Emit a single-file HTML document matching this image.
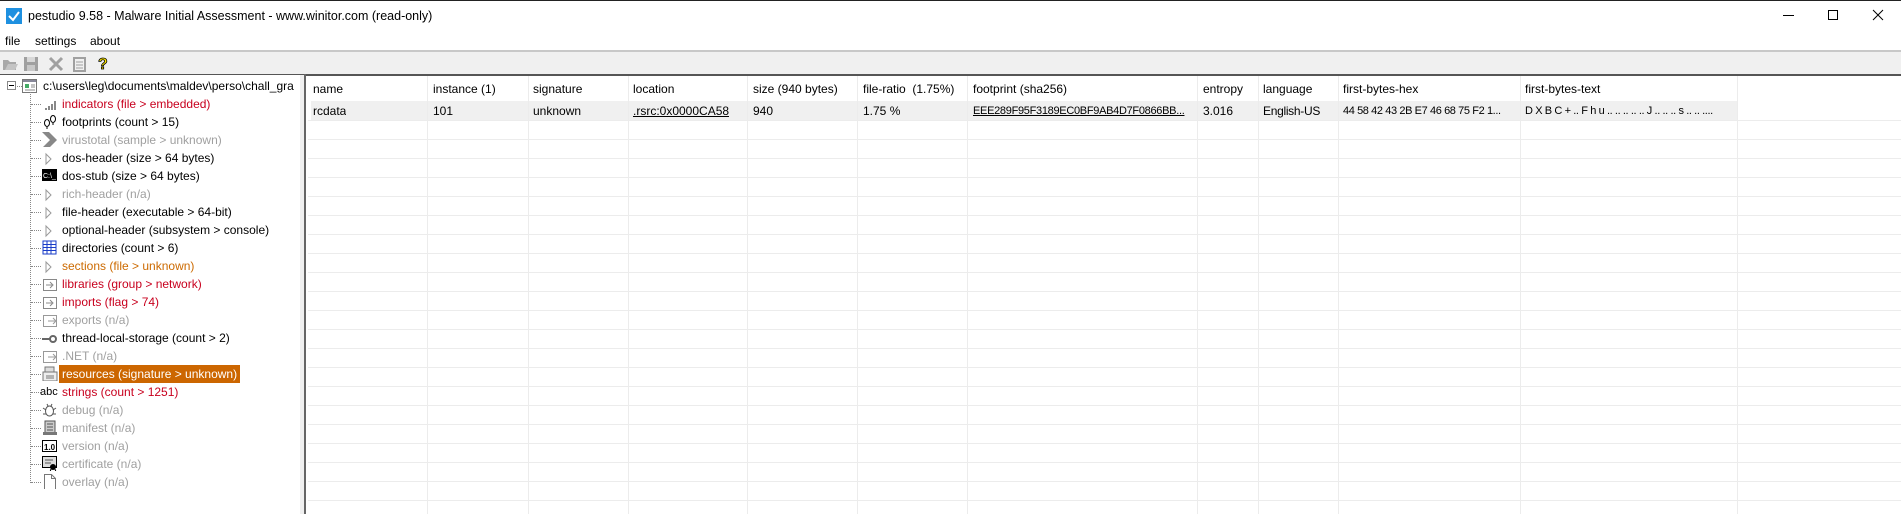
<!DOCTYPE html>
<html><head><meta charset="utf-8"><style>
*{margin:0;padding:0;box-sizing:border-box}
body{width:1901px;height:514px;overflow:hidden;background:#fff;font-family:"Liberation Sans",sans-serif;font-size:12px;color:#000;position:relative}
.a{position:absolute;white-space:nowrap}
.t{position:absolute;left:62px;height:18px;line-height:18px;white-space:nowrap;padding:0 3px;margin-left:-3px}
.red{color:#c8001e}.or{color:#cc6a00}.gr{color:#a0a0a0}
.sel{background:#cc6600;color:#fff}
.h{position:absolute;top:81px;height:16px;line-height:16px;white-space:nowrap}
.d{position:absolute;top:102px;height:18px;line-height:18px;white-space:nowrap;overflow:hidden}
.vl{position:absolute;top:76px;bottom:0;width:1px;background:#ececec}
.hl{position:absolute;left:308px;right:0;height:1px;background:#ececec}
.dh{position:absolute;left:31px;width:10px;height:1px;border-top:1px dotted #888}
.ic{position:absolute;left:42px;width:15px;height:15px}
</style></head><body>
<!-- title bar -->
<div class="a" style="left:0;top:0;width:1901px;height:1px;background:#222"></div>
<svg class="a" style="left:6px;top:8px" width="16" height="16"><rect width="16" height="16" fill="#1e90e0"/><path d="M3 8 L7 12 L13 4" stroke="#fff" stroke-width="2" fill="none"/></svg>
<div class="a" style="left:28px;top:8px;font-size:12.5px;line-height:16px">pestudio 9.58 - Malware Initial Assessment - www.winitor.com (read-only)</div>
<svg class="a" style="left:1780px;top:8px" width="110" height="16"><path d="M3 7.5H14" stroke="#000"/><rect x="48.5" y="2.5" width="9" height="9" fill="none" stroke="#000"/><path d="M93 2L103 12M103 2L93 12" stroke="#000"/></svg>
<!-- menu -->
<div class="a" style="left:5px;top:33px;line-height:16px">file</div>
<div class="a" style="left:35px;top:33px;line-height:16px">settings</div>
<div class="a" style="left:90px;top:33px;line-height:16px">about</div>
<div class="a" style="left:0;top:50px;width:1901px;height:2px;background:#c8c8c8"></div>
<div class="a" style="left:0;top:52px;width:1901px;height:23px;background:#f0f0f0"></div>
<!-- toolbar icons -->
<svg class="a" style="left:2px;top:55px" width="110" height="17">
<path d="M1 5h5l2 2h6v8H1z" fill="#a8a8a8"/><path d="M3 15l3-6h10l-3 6z" fill="#c4c4c4"/>
<rect x="22" y="2" width="14" height="14" fill="#a0a0a0"/><rect x="25" y="2" width="8" height="5" fill="#d8d8d8"/><rect x="25" y="10" width="8" height="6" fill="#c8c8c8"/>
<path d="M48 3L60 15M60 3L48 15" stroke="#a0a0a0" stroke-width="3"/>
<rect x="72" y="3" width="11" height="13" fill="none" stroke="#a0a0a0" stroke-width="2"/><path d="M74 7h7M74 10h7M74 13h7" stroke="#a0a0a0"/>
<text x="96" y="14" font-size="16" font-weight="bold" fill="#ffe800" stroke="#000" stroke-width="0.8" font-family="Liberation Sans">?</text>
</svg>
<!-- tree panel -->
<div class="a" style="left:0;top:74px;width:304px;height:1px;background:#555"></div>
<div class="a" style="left:300px;top:75px;width:4px;bottom:0;background:#f0f0f0"></div>
<div class="a" style="left:304px;top:74px;width:2px;bottom:0;background:#666"></div>
<div class="a" style="left:306px;top:74px;width:1595px;height:2px;background:#555"></div>
<!-- root -->
<div class="a" style="left:7px;top:81px;width:9px;height:9px;border:1px solid #888;background:#fff"></div>
<div class="a" style="left:9px;top:85px;width:5px;height:1px;background:#000"></div>
<div class="a" style="left:17px;top:86px;width:5px;border-top:1px dotted #888"></div>
<svg class="a" style="left:22px;top:79px" width="15" height="14"><rect x="0.5" y="0.5" width="14" height="13" fill="#fff" stroke="#777"/><rect x="1" y="1" width="13" height="2" fill="#889"/><rect x="3" y="5" width="4" height="4" fill="#4a6"/><path d="M9 6h4M9 8h4M3 11h10" stroke="#888"/></svg>
<div class="t" style="left:43px;top:77px">c:\users\leg\documents\maldev\perso\chall_gra</div>
<div class="a" style="left:30px;top:92px;height:391px;border-left:1px dotted #888"></div>

<div class="dh" style="top:104px"></div><svg class="ic" style="top:97px"><path d="M3 12h2M7 9v4M10 7v6M13 4v9" stroke="#888" stroke-width="2"/></svg>
<div class="t red" style="top:95px">indicators (file &gt; embedded)</div>
<div class="dh" style="top:122px"></div><svg class="ic" style="top:114px"><ellipse cx="5" cy="9" rx="2.5" ry="3.5" fill="none" stroke="#000"/><ellipse cx="11" cy="5" rx="2.5" ry="3.5" fill="none" stroke="#000"/><path d="M4 14h2M10 10h2" stroke="#000"/></svg>
<div class="t" style="top:113px">footprints (count &gt; 15)</div>
<div class="dh" style="top:140px"></div><svg class="ic" style="top:132px"><path d="M0 0h7l8 8-8 8H0l8-8z" fill="#888"/></svg>
<div class="t gr" style="top:131px">virustotal (sample &gt; unknown)</div>
<div class="dh" style="top:158px"></div><svg class="ic" style="top:151px"><path d="M4 3l5 5-5 5z" fill="none" stroke="#999"/></svg>
<div class="t" style="top:149px">dos-header (size &gt; 64 bytes)</div>
<div class="dh" style="top:176px"></div><svg class="ic" style="top:169px"><rect width="15" height="12" fill="#000"/><text x="1" y="9" font-size="7" fill="#fff" font-family="Liberation Sans">C:\_</text></svg>
<div class="t" style="top:167px">dos-stub (size &gt; 64 bytes)</div>
<div class="dh" style="top:194px"></div><svg class="ic" style="top:187px"><path d="M4 3l5 5-5 5z" fill="none" stroke="#999"/></svg>
<div class="t gr" style="top:185px">rich-header (n/a)</div>
<div class="dh" style="top:212px"></div><svg class="ic" style="top:205px"><path d="M4 3l5 5-5 5z" fill="none" stroke="#999"/></svg>
<div class="t" style="top:203px">file-header (executable &gt; 64-bit)</div>
<div class="dh" style="top:230px"></div><svg class="ic" style="top:223px"><path d="M4 3l5 5-5 5z" fill="none" stroke="#999"/></svg>
<div class="t" style="top:221px">optional-header (subsystem &gt; console)</div>
<div class="dh" style="top:248px"></div><svg class="ic" style="top:240px"><rect x="1" y="1" width="13" height="13" fill="#fff" stroke="#1a3cc8"/><path d="M1 4.5h13M1 7.5h13M1 10.5h13M5 1v13M9 1v13" stroke="#1a3cc8"/></svg>
<div class="t" style="top:239px">directories (count &gt; 6)</div>
<div class="dh" style="top:266px"></div><svg class="ic" style="top:259px"><path d="M4 3l5 5-5 5z" fill="none" stroke="#999"/></svg>
<div class="t or" style="top:257px">sections (file &gt; unknown)</div>
<svg class="a" style="display:none"></svg>
<div class="dh" style="top:284px"></div><svg class="ic" style="top:277px;width:16px"><rect x="1.5" y="2.5" width="13" height="11" fill="#fff" stroke="#888"/><path d="M4 8h6M8 5l3 3-3 3" stroke="#888" fill="none"/></svg>
<div class="t red" style="top:275px">libraries (group &gt; network)</div>
<div class="dh" style="top:302px"></div><svg class="ic" style="top:295px;width:16px"><rect x="1.5" y="2.5" width="13" height="11" fill="#fff" stroke="#888"/><path d="M4 8h6M8 5l3 3-3 3" stroke="#888" fill="none"/></svg>
<div class="t red" style="top:293px">imports (flag &gt; 74)</div>
<div class="dh" style="top:320px"></div><svg class="ic" style="top:313px;width:16px"><rect x="1.5" y="2.5" width="13" height="11" fill="#fff" stroke="#999"/><path d="M6 8h7M11 5l3 3-3 3" stroke="#999" fill="none"/></svg>
<div class="t gr" style="top:311px">exports (n/a)</div>
<div class="dh" style="top:338px"></div><svg class="ic" style="top:331px"><path d="M0 8h8" stroke="#666" stroke-width="2"/><circle cx="11" cy="8" r="3" fill="none" stroke="#666" stroke-width="2"/></svg>
<div class="t" style="top:329px">thread-local-storage (count &gt; 2)</div>
<div class="dh" style="top:356px"></div><svg class="ic" style="top:349px;width:16px"><rect x="1.5" y="2.5" width="13" height="11" fill="#fff" stroke="#999"/><path d="M6 8h7M11 5l3 3-3 3" stroke="#999" fill="none"/></svg>
<div class="t gr" style="top:347px">.NET (n/a)</div>
<div class="dh" style="top:374px"></div><svg class="ic" style="top:366px;width:16px"><rect x="3" y="1" width="9" height="10" fill="#ddd" stroke="#777"/><rect x="1" y="6" width="14" height="9" fill="#eee" stroke="#777"/><path d="M4 10h8M4 12h8" stroke="#777"/></svg>
<div class="t sel" style="top:365px">resources (signature &gt; unknown)</div>
<div class="dh" style="top:392px"></div><div class="a" style="left:40px;top:384px;font-size:11px;line-height:16px">abc</div>
<div class="t red" style="top:383px">strings (count &gt; 1251)</div>
<div class="dh" style="top:410px"></div><svg class="ic" style="top:402px"><ellipse cx="7.5" cy="9" rx="4" ry="5" fill="none" stroke="#555"/><path d="M1 6l3 2M14 6l-3 2M1 12h3M14 12h-3M5 2l1 2M10 2l-1 2" stroke="#555"/></svg>
<div class="t gr" style="top:401px">debug (n/a)</div>
<div class="dh" style="top:428px"></div><svg class="ic" style="top:420px"><rect x="3" y="1" width="10" height="12" fill="#ccc" stroke="#555"/><path d="M5 4h6M5 7h6M5 10h6" stroke="#555"/><rect x="1" y="12" width="14" height="3" fill="#777"/></svg>
<div class="t gr" style="top:419px">manifest (n/a)</div>
<div class="dh" style="top:446px"></div><svg class="ic" style="top:439px"><rect x="0.5" y="1.5" width="14" height="11" fill="#fff" stroke="#000"/><text x="2" y="11" font-size="8" font-weight="bold" font-family="Liberation Sans">1.0</text></svg>
<div class="t gr" style="top:437px">version (n/a)</div>
<div class="dh" style="top:464px"></div><svg class="ic" style="top:456px;width:16px"><rect x="0.5" y="0.5" width="14" height="11" fill="#ddd" stroke="#000"/><path d="M3 4h8M3 7h6" stroke="#555"/><circle cx="11" cy="11" r="3" fill="#000"/><path d="M9 13l-1 3M13 13l1 3" stroke="#000"/></svg>
<div class="t gr" style="top:455px">certificate (n/a)</div>
<div class="dh" style="top:482px"></div><svg class="ic" style="top:474px"><path d="M2.5 0.5h7l4 4v11h-11z" fill="#fff" stroke="#777"/><path d="M9.5 0.5v4h4" fill="none" stroke="#777"/></svg>
<div class="t gr" style="top:473px">overlay (n/a)</div>

<!-- table -->
<div class="a" style="left:311px;top:101px;width:1426px;height:19px;background:#f0f0f0"></div>
<div class="vl" style="left:427px"></div><div class="vl" style="left:528px"></div><div class="vl" style="left:628px"></div><div class="vl" style="left:747px"></div><div class="vl" style="left:857px"></div><div class="vl" style="left:967px"></div><div class="vl" style="left:1197px"></div><div class="vl" style="left:1258px"></div><div class="vl" style="left:1338px"></div><div class="vl" style="left:1520px"></div><div class="vl" style="left:1737px"></div>
<div class="hl" style="top:120px"></div><div class="hl" style="top:139px"></div><div class="hl" style="top:158px"></div><div class="hl" style="top:177px"></div><div class="hl" style="top:196px"></div><div class="hl" style="top:215px"></div><div class="hl" style="top:234px"></div><div class="hl" style="top:253px"></div><div class="hl" style="top:272px"></div><div class="hl" style="top:291px"></div><div class="hl" style="top:310px"></div><div class="hl" style="top:329px"></div><div class="hl" style="top:348px"></div><div class="hl" style="top:367px"></div><div class="hl" style="top:386px"></div><div class="hl" style="top:405px"></div><div class="hl" style="top:424px"></div><div class="hl" style="top:443px"></div><div class="hl" style="top:462px"></div><div class="hl" style="top:481px"></div><div class="hl" style="top:500px"></div>
<div class="h" style="left:313px">name</div>
<div class="h" style="left:433px">instance (1)</div>
<div class="h" style="left:533px">signature</div>
<div class="h" style="left:633px">location</div>
<div class="h" style="left:753px">size (940 bytes)</div>
<div class="h" style="left:863px">file-ratio&nbsp; (1.75%)</div>
<div class="h" style="left:973px">footprint (sha256)</div>
<div class="h" style="left:1203px">entropy</div>
<div class="h" style="left:1263px">language</div>
<div class="h" style="left:1343px">first-bytes-hex</div>
<div class="h" style="left:1525px">first-bytes-text</div>
<div class="d" style="left:313px">rcdata</div>
<div class="d" style="left:433px">101</div>
<div class="d" style="left:533px">unknown</div>
<div class="d" style="left:633px;text-decoration:underline">.rsrc:0x0000CA58</div>
<div class="d" style="left:753px">940</div>
<div class="d" style="left:863px">1.75 %</div>
<div class="d" style="left:973px;width:222px;text-decoration:underline;font-size:11px;letter-spacing:-0.3px">EEE289F95F3189EC0BF9AB4D7F0866BB...</div>
<div class="d" style="left:1203px">3.016</div>
<div class="d" style="left:1263px;letter-spacing:-0.3px">English-US</div>
<div class="d" style="left:1343px;width:176px;font-size:11px;letter-spacing:-0.4px">44 58 42 43 2B E7 46 68 75 F2 1...</div>
<div class="d" style="left:1525px;width:210px;font-size:11px;letter-spacing:-0.4px">D X B C + .. F h u .. .. .. .. .. J .. .. .. s .. .. ....</div>
</body></html>
